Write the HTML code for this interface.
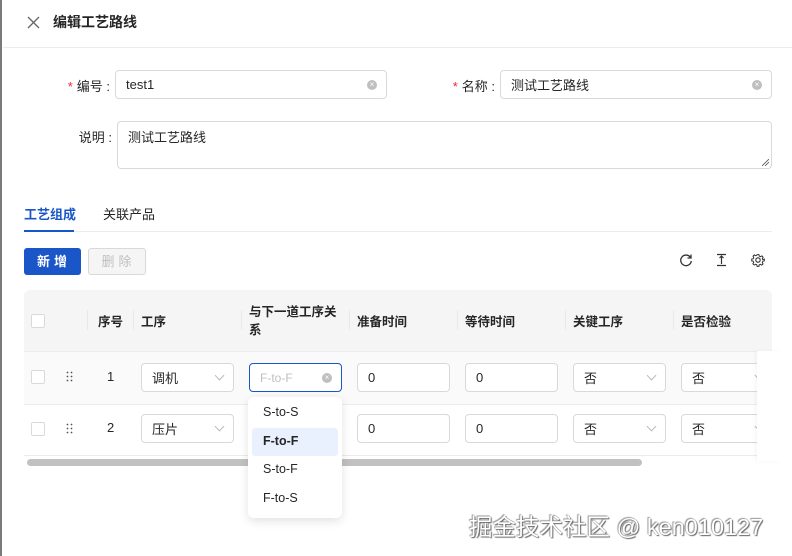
<!DOCTYPE html>
<html><head><meta charset="utf-8"><style>
*{box-sizing:border-box;margin:0;padding:0}
body{width:792px;height:556px;overflow:hidden;background:#fff;position:relative;font-family:"Liberation Sans","Noto Sans CJK SC",sans-serif;font-size:13px;color:#262626}
.a{position:absolute}
.inp{position:absolute;border:1px solid #d9d9d9;border-radius:4px;background:#fff;padding-left:10px;display:flex;align-items:center;font-size:13px;color:#262626}
.clr{position:absolute;right:9px;top:50%;margin-top:-5px;width:10px;height:10px;border-radius:50%;background:#bfbfbf;color:#fff;font-size:8px;line-height:10px;text-align:center}
.lbl{position:absolute;font-size:13px;color:#262626;text-align:right}
.star{color:#f5222d;margin-right:4px}
.th{position:absolute;top:290px;height:61px;font-weight:bold;font-size:12.5px;display:flex;align-items:center}
.sep{position:absolute;top:310px;width:1px;height:20px;background:#e8e8e8}
.cb{position:absolute;width:14px;height:14px;border:1px solid #d9d9d9;border-radius:2px;background:#fff}
.chev{position:absolute;right:10px;top:50%;margin-top:-6px;width:7px;height:7px;border-right:1px solid #bbb;border-bottom:1px solid #bbb;transform:rotate(45deg)}
.sel,.num{height:29px}
.opt{position:absolute;left:263px;font-size:12.5px}
</style></head><body>
<div class="a" style="left:0;top:0;width:2px;height:556px;background:#7a7a7a"></div>
<svg class="a" style="left:27px;top:16px" width="13" height="13" viewBox="0 0 13 13"><path d="M1 1L12 12M12 1L1 12" stroke="#666" stroke-width="1.3"/></svg>
<div class="a" style="left:53px;top:12px;font-size:14px;font-weight:bold;line-height:20px">编辑工艺路线</div>
<div class="a" style="left:3px;top:47px;width:789px;height:1px;background:#ececec"></div>

<div class="lbl" style="left:40px;top:76px;width:70px"><span class="star">*</span>编号 :</div>
<div class="inp" style="left:115px;top:70px;width:272px;height:29px">test1<span class="clr">×</span></div>
<div class="lbl" style="left:420px;top:76px;width:75px"><span class="star">*</span>名称 :</div>
<div class="inp" style="left:500px;top:70px;width:272px;height:29px">测试工艺路线<span class="clr">×</span></div>
<div class="lbl" style="left:40px;top:127px;width:72px">说明 :</div>
<div class="inp" style="left:117px;top:121px;width:655px;height:48px;align-items:flex-start;padding-top:5px">测试工艺路线
<svg class="a" style="right:2px;bottom:2px" width="7" height="7"><path d="M0 7L7 0M3 7L7 3" stroke="#555" stroke-width="0.8"/></svg></div>

<div class="a" style="left:24px;top:204px;font-weight:bold;color:#1a56c8;font-size:13px">工艺组成</div>
<div class="a" style="left:103px;top:204px;font-size:13px">关联产品</div>
<div class="a" style="left:24px;top:231px;width:748px;height:1px;background:#ececec"></div>
<div class="a" style="left:24px;top:230px;width:50px;height:2px;background:#1a56c8"></div>

<div class="a" style="left:24px;top:248px;width:57px;height:27px;background:#1a56c8;border-radius:3px;color:#fff;font-weight:bold;text-align:center;line-height:27px;letter-spacing:4px;padding-left:3px">新增</div>
<div class="a" style="left:88px;top:248px;width:58px;height:27px;background:#f5f5f5;border:1px solid #d9d9d9;border-radius:3px;color:#bfbfbf;text-align:center;line-height:25px;letter-spacing:4px;padding-left:3px">删除</div>

<svg class="a" style="left:679px;top:253px" width="14" height="14" viewBox="0 0 14 14"><path d="M11.5 4.5A5.3 5.3 0 1 0 12.3 8" fill="none" stroke="#333" stroke-width="1.3"/><path d="M12 1.5V5H8.5" fill="none" stroke="#333" stroke-width="1.3"/></svg>
<svg class="a" style="left:715px;top:253px" width="13" height="14" viewBox="0 0 13 14"><path d="M2 1.5H11M2 12.5H11M6.5 3V11M4.5 5L6.5 3L8.5 5" fill="none" stroke="#333" stroke-width="1.2"/></svg>
<svg class="a" style="left:751px;top:253px" width="14" height="14" viewBox="0 0 14 14"><path d="M6 1h2l.4 1.7 1.4.6 1.5-.9 1.4 1.4-.9 1.5.6 1.4L14 6v2l-1.7.4-.6 1.4.9 1.5-1.4 1.4-1.5-.9-1.4.6L8 14H6l-.4-1.7-1.4-.6-1.5.9-1.4-1.4.9-1.5-.6-1.4L0 8V6l1.7-.4.6-1.4-.9-1.5 1.4-1.4 1.5.9 1.4-.6z" transform="scale(.9) translate(.8 .8)" fill="none" stroke="#333" stroke-width="1.1"/><circle cx="7" cy="7" r="2.2" fill="none" stroke="#333" stroke-width="1.1"/></svg>

<!-- table -->
<div class="a" style="left:24px;top:290px;width:748px;height:61px;background:#f5f5f5;border-radius:6px 6px 0 0"></div>
<div class="a" style="left:24px;top:351px;width:733px;height:53px;background:#fafafa"></div>
<div class="a" style="left:24px;top:351px;width:733px;height:1px;background:#ececec"></div>
<div class="a" style="left:24px;top:404px;width:733px;height:1px;background:#ececec"></div>
<div class="a" style="left:24px;top:455px;width:733px;height:1px;background:#ececec"></div>
<div class="a" style="left:27px;top:459px;width:615px;height:7px;background:#c1c1c1;border-radius:4px"></div>

<div class="cb" style="left:31px;top:314px"></div>
<div class="sep" style="left:87px"></div>
<div class="th" style="left:98px">序号</div>
<div class="sep" style="left:133px"></div>
<div class="th" style="left:141px">工序</div>
<div class="sep" style="left:241px"></div>
<div class="th" style="left:249px;width:92px;line-height:18px">与下一道工序关系</div>
<div class="sep" style="left:349px"></div>
<div class="th" style="left:357px">准备时间</div>
<div class="sep" style="left:457px"></div>
<div class="th" style="left:465px">等待时间</div>
<div class="sep" style="left:565px"></div>
<div class="th" style="left:573px">关键工序</div>
<div class="sep" style="left:673px"></div>
<div class="th" style="left:681px">是否检验</div>

<!-- row1 -->
<div class="cb" style="left:31px;top:370px"></div>
<svg class="a" style="left:66px;top:371px" width="8" height="12"><g fill="#555"><circle cx="1.5" cy="1.5" r=".9"/><circle cx="5.5" cy="1.5" r=".9"/><circle cx="1.5" cy="5.5" r=".9"/><circle cx="5.5" cy="5.5" r=".9"/><circle cx="1.5" cy="9.5" r=".9"/><circle cx="5.5" cy="9.5" r=".9"/></g></svg>
<div class="a" style="left:107px;top:369px">1</div>
<div class="inp sel" style="left:141px;top:363px;width:93px">调机<span class="chev"></span></div>
<div class="inp sel" style="left:249px;top:363px;width:93px;border-color:#1a56c8;color:#bfbfbf;font-size:12px">F-to-F<span class="clr">×</span></div>
<div class="inp num" style="left:357px;top:363px;width:93px">0</div>
<div class="inp num" style="left:465px;top:363px;width:93px">0</div>
<div class="inp sel" style="left:573px;top:363px;width:93px">否<span class="chev"></span></div>
<div class="inp sel" style="left:681px;top:363px;width:93px">否<span class="chev"></span></div>

<!-- row2 -->
<div class="cb" style="left:31px;top:422px"></div>
<svg class="a" style="left:66px;top:423px" width="8" height="12"><g fill="#555"><circle cx="1.5" cy="1.5" r=".9"/><circle cx="5.5" cy="1.5" r=".9"/><circle cx="1.5" cy="5.5" r=".9"/><circle cx="5.5" cy="5.5" r=".9"/><circle cx="1.5" cy="9.5" r=".9"/><circle cx="5.5" cy="9.5" r=".9"/></g></svg>
<div class="a" style="left:107px;top:420px">2</div>
<div class="inp sel" style="left:141px;top:414px;width:93px">压片<span class="chev"></span></div>
<div class="inp num" style="left:357px;top:414px;width:93px">0</div>
<div class="inp num" style="left:465px;top:414px;width:93px">0</div>
<div class="inp sel" style="left:573px;top:414px;width:93px">否<span class="chev"></span></div>
<div class="inp sel" style="left:681px;top:414px;width:93px">否<span class="chev"></span></div>

<div class="a" style="left:757px;top:351px;width:25px;height:110px;background:#fff;box-shadow:-2px 0 4px rgba(0,0,0,.04)"></div>

<!-- dropdown -->
<div class="a" style="left:248px;top:397px;width:94px;height:121px;background:#fff;border-radius:6px;box-shadow:0 3px 10px rgba(0,0,0,.12)"></div>
<div class="a" style="left:252px;top:428px;width:86px;height:28px;background:#e8f1fd;border-radius:3px"></div>
<div class="opt" style="top:405px">S-to-S</div>
<div class="opt" style="top:434px;font-weight:bold">F-to-F</div>
<div class="opt" style="top:462px">S-to-F</div>
<div class="opt" style="top:491px">F-to-S</div>

<div class="a" style="left:469px;top:508px;font-size:23.5px;color:#fff;text-shadow:1px 1px 1px #666,-1px -1px 1px #999,0 0 1px #555;white-space:nowrap">掘金技术社区 @ ken010127</div>
</body></html>
